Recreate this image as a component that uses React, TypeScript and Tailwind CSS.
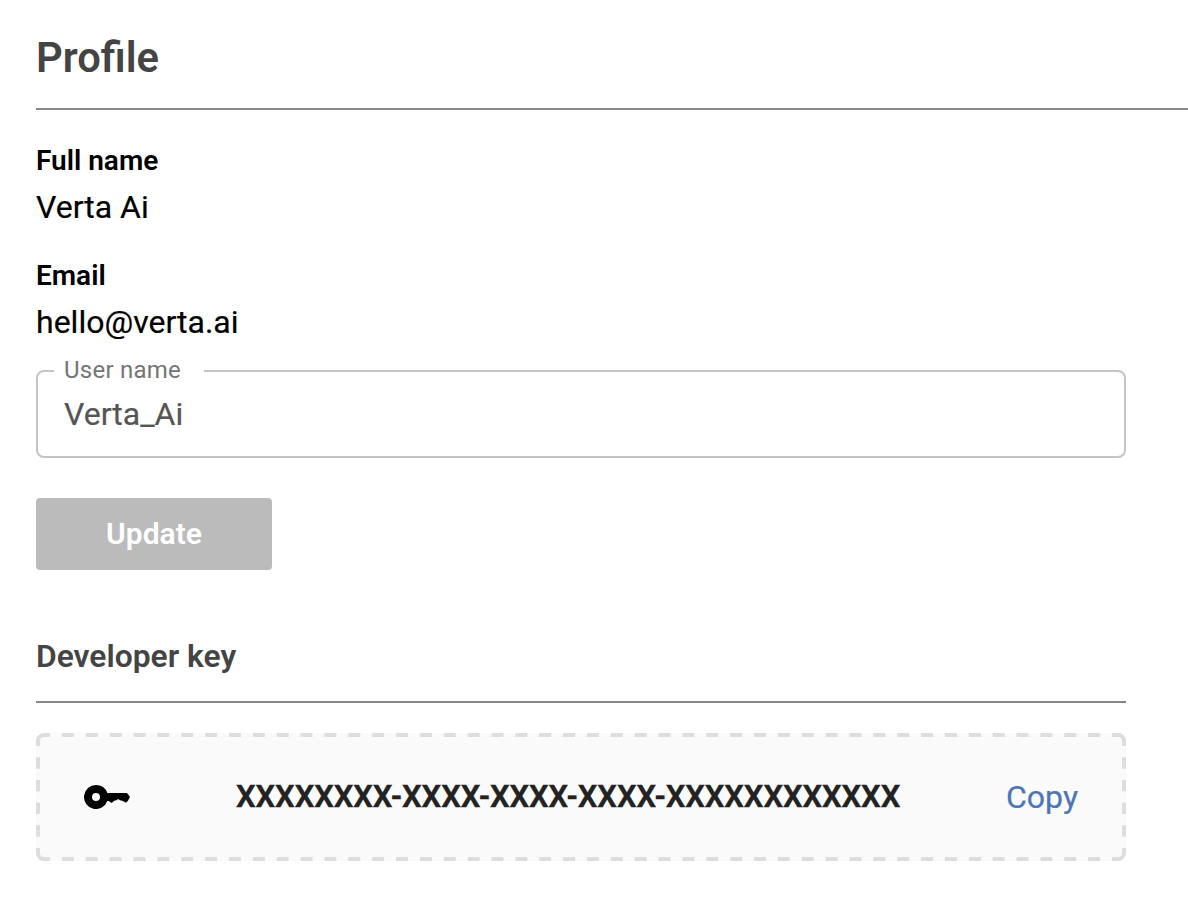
export default function App() {
  return (
    <main className="h-[908px] overflow-hidden bg-white pl-9 font-['Roboto',sans-serif] text-black">
      <header className="flex h-[110px] items-start border-b-2 border-[#888] pt-[33px]">
        <h1 className="text-[41.7px] leading-[49px] font-semibold text-[#444]">Profile</h1>
      </header>
      <div className="w-[1090px]">
        <section className="pt-[35px]">
          <h2 className="text-[28px] leading-8 font-semibold">Full name</h2>
          <p className="mt-[11px] text-[32px] leading-[38px] [-webkit-text-stroke:0.2px]">Verta Ai</p>
        </section>
        <section className="pt-[34px]">
          <h2 className="text-[28px] leading-8 font-semibold">Email</h2>
          <p className="mt-[11px] text-[32px] leading-[38px] [-webkit-text-stroke:0.2px]">hello@verta.ai</p>
        </section>
        <fieldset className="mt-[14px] h-[103px] rounded-lg border-2 border-[#c4c4c4] pl-[26px]">
          <legend className="-ml-[10px] h-8 w-[150px] pl-[10px] text-[24px] leading-[30px] tracking-[0.25px] text-[#757575]">User name</legend>
          <p className="mt-2 text-[32px] leading-[38px] text-[#555] [-webkit-text-stroke:0.2px]">Verta_Ai</p>
        </fieldset>
        <button className="mt-10 flex h-[72px] w-[236px] items-center justify-center rounded bg-[#bbb] pb-[2px] text-[30px] font-semibold text-white">Update</button>
        <h2 className="mt-[67px] h-[66px] border-b-2 border-[#888] text-[31.8px] leading-[38px] font-semibold text-[#444]">Developer key</h2>
        <div className="relative mt-[30px] flex h-32 items-center rounded-lg bg-[#fafafa] pl-12">
          <svg className="absolute inset-0" width="1090" height="128" fill="none" stroke="#ddd" strokeWidth="4">
            <path d="M14 2H8a6 6 0 0 0-6 6v5M1076 2h6a6 6 0 0 1 6 6v5M14 126H8a6 6 0 0 1-6-6v-5M1076 126h6a6 6 0 0 0 6-6v-5" />
            <path strokeDasharray="11.933" d="M25.933 2H1076M25.933 126H1076" />
            <path strokeDasharray="11.333" d="M2 24.333V115M1088 24.333V115" />
          </svg>
          <svg className="h-6 w-[47px]" viewBox="0 0 47 24"><path fillRule="evenodd" d="M12 0a12 12 0 1 0 11.3 16h1.2l3.2 2 2.5-2.2 2.3-.6 1.5-1.2 2 1.2 2.2.5 3.8 2 2-2 2-3.7-3-4H23.3A12 12 0 0 0 12 0Zm0 8a4 4 0 1 1 0 8 4 4 0 0 1 0-8Z" /></svg>
          <span className="ml-[105px] w-[770px] text-[31px] font-semibold tracking-[-0.09px] text-[#222] [-webkit-text-stroke:0.4px]">XXXXXXXX-XXXX-XXXX-XXXX-XXXXXXXXXXXX</span>
          <button className="text-[32px] text-[#4b76b8] [-webkit-text-stroke:0.2px]">Copy</button>
        </div>
      </div>
    </main>
  );
}
